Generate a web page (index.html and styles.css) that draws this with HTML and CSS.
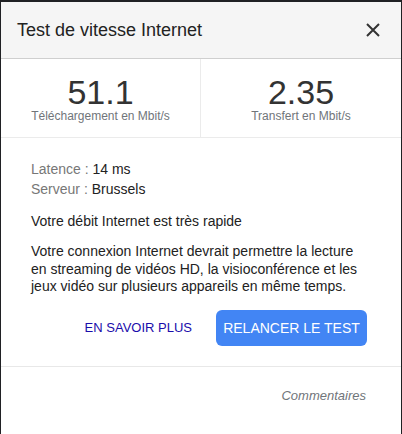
FILE: index.html
```html
<!DOCTYPE html>
<html lang="fr">
<head>
<meta charset="utf-8">
<link rel="stylesheet" href="styles.css">
</head>
<body>
<div class="card">
  <div class="header">
    <div class="title">Test de vitesse Internet</div>
    <svg class="close" width="14" height="14" viewBox="0 0 14 14"><path d="M1 1 L13 13 M13 1 L1 13" stroke="#333" stroke-width="2" fill="none"/></svg>
  </div>
  <div class="stats">
    <div class="stat">
      <div class="num">51.1</div>
      <div class="unit">Téléchargement en Mbit/s</div>
    </div>
    <div class="stat">
      <div class="num">2.35</div>
      <div class="unit">Transfert en Mbit/s</div>
    </div>
  </div>
  <div class="details">
    <div class="info"><span class="lbl">Latence : </span>14 ms</div>
    <div class="info"><span class="lbl">Serveur : </span>Brussels</div>
    <p class="verdict">Votre débit Internet est très rapide</p>
    <p class="desc">Votre connexion Internet devrait permettre la lecture en streaming de vidéos HD, la visioconférence et les jeux vidéo sur plusieurs appareils en même temps.</p>
    <div class="actions">
      <a class="more">EN SAVOIR PLUS</a>
      <button class="rerun">RELANCER LE TEST</button>
    </div>
  </div>
  <div class="footer">
    <span class="feedback">Commentaires</span>
  </div>
</div>
</body>
</html>
```

FILE: styles.css
```css
html, body {
  margin: 0;
  padding: 0;
  height: 100%;
}
body {
  background: #202124;
  font-family: "Liberation Sans", Arial, sans-serif;
  overflow: hidden;
}
.card {
  margin: 2px 1px 0 1px;
  background: #fff;
  height: calc(100% - 2px);
  display: flex;
  flex-direction: column;
}
.header {
  height: 56px;
  background: #f5f5f5;
  border-bottom: 1px solid #cfcfcf;
  display: flex;
  align-items: center;
  justify-content: space-between;
  padding: 0 21px 0 16px;
}
.title {
  font-size: 18px;
  line-height: 22px;
  color: #222;
}
.close {
  display: block;
}
.stats {
  display: grid;
  grid-template-columns: 199px 1fr;
  border-bottom: 1px solid #ebebeb;
}
.stat {
  display: flex;
  flex-direction: column;
  align-items: center;
  padding: 16px 0 14px;
}
.stat + .stat {
  border-left: 1px solid #ebebeb;
}
.num {
  font-size: 34px;
  line-height: 34px;
  color: #333;
}
.unit {
  font-size: 12px;
  line-height: 14px;
  color: #70757a;
}
.details {
  padding: 21px 34px 20px 30px;
  border-bottom: 1px solid #e8e8e8;
  font-size: 14px;
  color: #222;
}
.info {
  line-height: 20px;
}
.lbl {
  color: #777;
}
.verdict {
  margin: 13px 0 0;
  line-height: 18px;
}
.desc {
  margin: 13px 0 0;
  line-height: 17.5px;
}
.actions {
  display: flex;
  justify-content: flex-end;
  align-items: center;
  gap: 24px;
  margin-top: 14px;
}
.more {
  font-size: 13px;
  color: #1a0dab;
  text-decoration: none;
}
.rerun {
  font-family: "Liberation Sans", Arial, sans-serif;
  font-size: 14px;
  color: #fff;
  background: #4285f4;
  border: none;
  border-radius: 6px;
  height: 36px;
  width: 151px;
  padding: 0;
}
.footer {
  display: flex;
  justify-content: flex-end;
  padding: 21px 35px 0 0;
}
.feedback {
  font-size: 13px;
  font-style: italic;
  color: #70757a;
  line-height: 16px;
}
```
